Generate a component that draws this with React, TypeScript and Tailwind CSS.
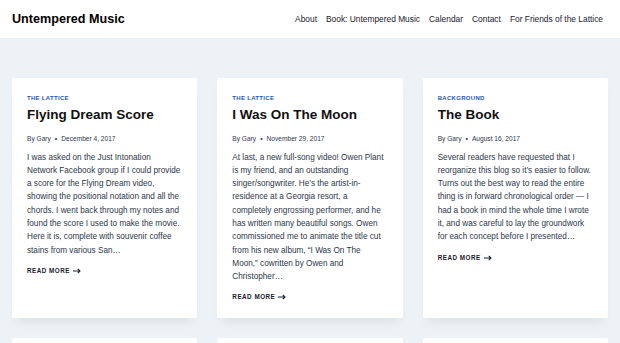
const posts = [
  {
    cat: 'The Lattice',
    title: 'Flying Dream Score',
    date: 'December 4, 2017',
    body: 'I was asked on the Just Intonation Network Facebook group if I could provide a score for the Flying Dream video, showing the positional notation and all the chords. I went back through my notes and found the score I used to make the movie. Here it is, complete with souvenir coffee stains from various San…',
  },
  {
    cat: 'The Lattice',
    title: 'I Was On The Moon',
    date: 'November 29, 2017',
    body: 'At last, a new full-song video! Owen Plant is my friend, and an outstanding singer/songwriter. He’s the artist-in-residence at a Georgia resort, a completely engrossing performer, and he has written many beautiful songs. Owen commissioned me to animate the title cut from his new album, “I Was On The Moon,” cowritten by Owen and Christopher…',
  },
  {
    cat: 'Background',
    title: 'The Book',
    date: 'August 16, 2017',
    body: 'Several readers have requested that I reorganize this blog so it’s easier to follow. Turns out the best way to read the entire thing is in forward chronological order — I had a book in mind the whole time I wrote it, and was careful to lay the groundwork for each concept before I presented…',
  },
]

const nav = ['About', 'Book: Untempered Music', 'Calendar', 'Contact', 'For Friends of the Lattice']

export default function App() {
  return (
    <div className="min-h-[343px] bg-[#edf2f7] font-['Liberation_Sans',Arial,sans-serif] text-[#2d3748]">
      {/* Header */}
      <header className="flex h-[38px] items-center justify-between bg-white pl-[12px] pr-[17px]">
        <span className="text-[12.6px] font-bold text-black">Untempered Music</span>
        <nav className="flex items-center gap-[9px] text-[8.4px] text-[#1a202c]">
          {nav.map((n) => (
            <a key={n} href="#">
              {n}
            </a>
          ))}
        </nav>
      </header>

      {/* Posts */}
      <main className="grid grid-cols-3 gap-x-[20px] gap-y-[20px] px-[12px] pt-[40px]">
        {posts.map((p) => (
          <article
            key={p.title}
            className="flex flex-col rounded-[2px] bg-white px-[15px] pt-[16px] pb-[17px] shadow-[0_8px_10px_-4px_rgba(0,0,0,0.07)]"
          >
            <div className="text-[6px] leading-[8px] font-bold tracking-[0.3px] text-[#2358b0] uppercase">
              {p.cat}
            </div>
            <h2 className="mt-[4px] text-[13.5px] leading-[18px] font-bold text-[#111]">{p.title}</h2>
            <div className="mt-[10px] flex items-center text-[6.6px] leading-[10px] text-[#2d3748]">
              <span>By Gary</span>
              <span className="mx-[4px] text-[7px]">•</span>
              <span>{p.date}</span>
            </div>
            <p className="mt-[6.5px] text-[8.2px] leading-[13.3px] text-[#2d3748]">{p.body}</p>
            <a
              href="#"
              className="mt-[10px] flex items-center gap-[3px] text-[6.3px] leading-[8px] font-bold tracking-[0.5px] text-[#1a202c] uppercase"
            >
              Read More
              <svg width="8" height="6" viewBox="0 0 8 6" fill="none" stroke="currentColor" strokeWidth="1.1">
                <path d="M0 3h7M4.8 0.8L7 3 4.8 5.2" />
              </svg>
            </a>
          </article>
        ))}
        {posts.map((p) => (
          <div key={p.title + '2'} className="h-[40px] rounded-[2px] bg-white" />
        ))}
      </main>
    </div>
  )
}
